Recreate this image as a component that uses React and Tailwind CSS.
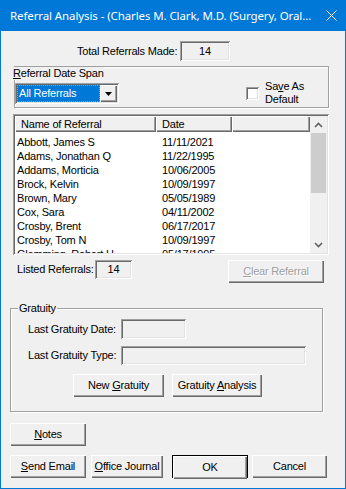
import React from "react";

const sunkenEdge =
  "shadow-[inset_1px_1px_0_#a0a0a0,inset_-1px_-1px_0_#fff,inset_2px_2px_0_#696969,inset_-2px_-2px_0_#e3e3e3]";
const raisedEdge =
  "shadow-[inset_1px_1px_0_#fff,inset_-1px_-1px_0_#696969,inset_-2px_-2px_0_#a0a0a0]";

const referrals = [
  ["Abbott, James S", "11/11/2021"],
  ["Adams, Jonathan Q", "11/22/1995"],
  ["Addams, Morticia", "10/06/2005"],
  ["Brock, Kelvin", "10/09/1997"],
  ["Brown, Mary", "05/05/1989"],
  ["Cox, Sara", "04/11/2002"],
  ["Crosby, Brent", "06/17/2017"],
  ["Crosby, Tom N", "10/09/1997"],
  ["Glemming, Robert H", "05/17/1995"],
];

const Btn = ({ children, className = "" }) => (
  <div className={`flex items-center justify-center h-[23px] bg-[#f0f0f0] leading-[13px] ${raisedEdge} ${className}`}>
    {children}
  </div>
);

const Field = ({ className = "", children }) => (
  <div className={`flex items-center justify-center bg-[#f0f0f0] ${sunkenEdge} ${className}`}>{children}</div>
);

const Chevron = ({ up }) => (
  <svg width="9" height="6" viewBox="0 0 9 6">
    <path
      d={up ? "M1 5 L4.5 1.5 L8 5" : "M1 1 L4.5 4.5 L8 1"}
      fill="none"
      stroke="#606060"
      strokeWidth="1.6"
    />
  </svg>
);

export default function App() {
  return (
    <div className="w-[346px] h-[489px] bg-[#0078d7] flex flex-col px-px pb-px font-['Liberation_Sans',Arial,sans-serif] text-[11px] tracking-[-0.2px] text-black">
      {/* title bar */}
      <div className="h-[31px] flex items-center pl-[9px] pr-[8px] text-white text-[11.5px] tracking-[-0.1px] font-['Noto_Sans',sans-serif]">
        <span className="whitespace-nowrap">Referral Analysis - (Charles M. Clark, M.D. (Surgery, Oral...</span>
        <svg className="ml-auto" width="11" height="11" viewBox="0 0 11 11">
          <path d="M0.5 0.5 L10.5 10.5 M10.5 0.5 L0.5 10.5" stroke="#fff" strokeWidth="1" />
        </svg>
      </div>

      <div className="flex-1 bg-[#f0f0f0] flex flex-col">
        {/* total */}
        <div className="mt-[10px] ml-[76px] flex items-center h-[20px]">
          <span className="w-[103px] text-right pr-[4px] whitespace-nowrap">Total Referrals Made:</span>
          <Field className="w-[50px] h-[20px]">14</Field>
        </div>

        {/* date span frame */}
        <div className="mt-[5px] ml-[13px] w-[315px] h-[42px] border border-[#a0a0a0] shadow-[inset_1px_1px_0_#fff,1px_1px_0_#fff] flex">
          <div className="w-[104px] flex flex-col">
            <div className="-ml-[2px] bg-[#f0f0f0] w-fit leading-[13px] whitespace-nowrap">
              <span className="underline">R</span>eferral Date Span
            </div>
            <div className={`mt-[3px] w-[104px] h-[21px] bg-white flex items-center pl-[2px] pr-[2px] ${sunkenEdge}`}>
              <div className="flex-1 h-[17px] bg-[#0078d7] text-white border border-dotted border-[#ff8728] flex items-center pl-[1px] leading-[13px] whitespace-nowrap">
                All Referrals
              </div>
              <div className={`w-[17px] h-[17px] bg-[#f0f0f0] flex items-center justify-center ${raisedEdge}`}>
                <svg width="7" height="4" viewBox="0 0 7 4">
                  <path d="M0 0 H7 L3.5 4 Z" fill="#000" />
                </svg>
              </div>
            </div>
          </div>
          <div className="ml-[127px] mt-[13px] flex items-center h-[26px]">
            <div className={`w-[13px] h-[13px] bg-white ${sunkenEdge}`} />
            <div className="ml-[6px] leading-[13px]">
              <div>
                Sa<span className="underline">v</span>e As
              </div>
              <div>Default</div>
            </div>
          </div>
        </div>

        {/* list view */}
        <div className={`mt-[6px] ml-[12px] w-[316px] h-[141px] bg-white p-[2px] flex overflow-hidden ${sunkenEdge}`}>
          <div className="flex-1 flex flex-col overflow-hidden">
            <div className="h-[16px] flex shrink-0 leading-[13px]">
              <div className={`w-[141px] bg-[#f0f0f0] pl-[6px] flex items-center ${raisedEdge}`}>Name of Referral</div>
              <div className={`w-[76px] bg-[#f0f0f0] pl-[6px] flex items-center ${raisedEdge}`}>Date</div>
              <div className={`flex-1 bg-[#f0f0f0] ${raisedEdge}`} />
            </div>
            <div className="pt-[3px] flex flex-col">
              {referrals.map(([name, date]) => (
                <div key={name} className="h-[14px] flex items-center leading-[14px] shrink-0">
                  <span className="w-[141px] pl-[2px] whitespace-nowrap">{name}</span>
                  <span className="pl-[6px]">{date}</span>
                </div>
              ))}
            </div>
          </div>
          <div className="w-[17px] bg-[#f0f0f0] flex flex-col">
            <div className="h-[17px] flex items-center justify-center">
              <Chevron up />
            </div>
            <div className="h-[60px] mx-[1px] bg-[#cdcdcd]" />
            <div className="flex-1" />
            <div className="h-[17px] flex items-center justify-center">
              <Chevron />
            </div>
          </div>
        </div>

        {/* listed + clear */}
        <div className="mt-[5px] flex items-start h-[23px]">
          <div className="ml-[16px] flex items-center h-[19px]">
            <span className="w-[78px] whitespace-nowrap">Listed Referrals:</span>
            <Field className="w-[37px] h-[19px]">14</Field>
          </div>
          <Btn className="ml-auto mr-[21px] w-[96px] text-[#a0a0a0] [text-shadow:1px_1px_0_#fff]">
            <span>
              <span className="underline">C</span>lear Referral
            </span>
          </Btn>
        </div>

        {/* gratuity */}
        <fieldset className="mt-[19px] ml-[9px] w-[313px] border border-[#a0a0a0] shadow-[inset_1px_1px_0_#fff,1px_1px_0_#fff] pb-[14px]">
          <legend className="ml-[7px] px-[1px] leading-[13px] bg-[#f0f0f0]">Gratuity</legend>
          <div className="mt-[4px] ml-[17px] flex items-center h-[20px]">
            <span className="w-[93px] whitespace-nowrap">Last Gratuity Date:</span>
            <Field className="w-[65px] h-[20px]" />
          </div>
          <div className="mt-[7px] ml-[17px] flex items-center h-[19px]">
            <span className="w-[93px] whitespace-nowrap">Last Gratuity Type:</span>
            <Field className="w-[185px] h-[19px]" />
          </div>
          <div className="mt-[9px] ml-[62px] flex gap-[8px]">
            <Btn className="w-[91px]">
              <span>
                New <span className="underline">G</span>ratuity
              </span>
            </Btn>
            <Btn className="w-[90px]">
              <span>
                Gratuity <span className="underline">A</span>nalysis
              </span>
            </Btn>
          </div>
        </fieldset>

        {/* notes */}
        <Btn className="mt-[11px] ml-[9px] w-[76px]">
          <span>
            <span className="underline">N</span>otes
          </span>
        </Btn>

        {/* bottom buttons */}
        <div className="mt-[9px] ml-[9px] flex">
          <Btn className="w-[76px]">
            <span>
              <span className="underline">S</span>end Email
            </span>
          </Btn>
          <Btn className="ml-[5px] w-[72px]">
            <span>
              <span className="underline">O</span>ffice Journal
            </span>
          </Btn>
          <div className="ml-[9px] w-[76px] h-[23px] border border-black flex">
            <Btn className="flex-1 h-[21px]">OK</Btn>
          </div>
          <Btn className="ml-[4px] w-[75px]">Cancel</Btn>
        </div>
      </div>
    </div>
  );
}
